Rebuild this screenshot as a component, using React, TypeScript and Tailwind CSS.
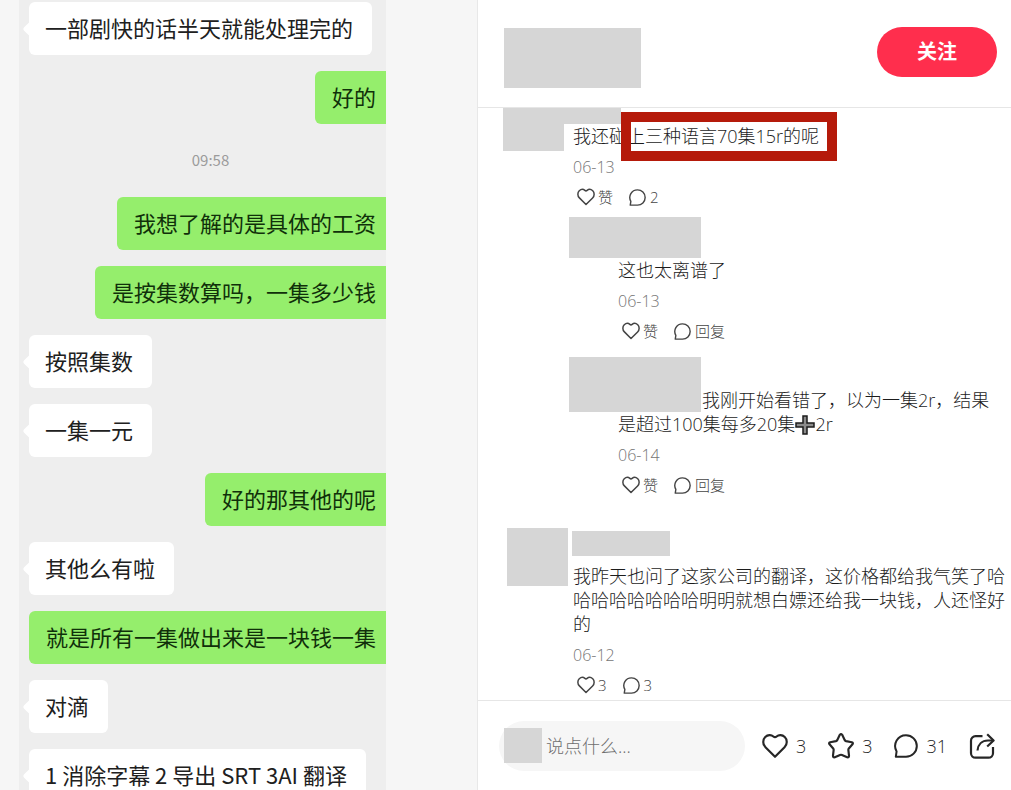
import type { ReactNode } from "react";

type Message = {
  from: "me" | "them" | "time";
  text: string;
};

const messages: Message[] = [
  { from: "them", text: "一部剧快的话半天就能处理完的" },
  { from: "me", text: "好的" },
  { from: "time", text: "09:58" },
  { from: "me", text: "我想了解的是具体的工资" },
  { from: "me", text: "是按集数算吗，一集多少钱" },
  { from: "them", text: "按照集数" },
  { from: "them", text: "一集一元" },
  { from: "me", text: "好的那其他的呢" },
  { from: "them", text: "其他么有啦" },
  { from: "me", text: "就是所有一集做出来是一块钱一集" },
  { from: "them", text: "对滴" },
  { from: "them", text: "1 消除字幕 2 导出 SRT 3AI 翻译" },
];

type IconProps = { className: string; strokeWidth?: number };

function HeartIcon({ className, strokeWidth = 2 }: IconProps) {
  return (
    <svg
      viewBox="0 0 24 24"
      fill="none"
      stroke="currentColor"
      strokeWidth={strokeWidth}
      strokeLinejoin="round"
      className={className}
      aria-hidden="true"
    >
      <path d="M12 22 3.200 13.200C.4 10.300.6 6 3 3.700 5.300 1.500 8.600 1.500 10.500 3.200 11.300 3.900 12.700 3.900 13.500 3.200 15.400 1.500 18.700 1.500 21 3.700 23.400 6 23.600 10.300 20.800 13.200Z" />
    </svg>
  );
}

function CommentIcon({ className, strokeWidth = 2 }: IconProps) {
  return (
    <svg
      viewBox="0 0 24 24"
      fill="none"
      stroke="currentColor"
      strokeWidth={strokeWidth}
      strokeLinejoin="round"
      className={className}
      aria-hidden="true"
    >
      <path d="M12 1.200A10.800 10.800 0 1 1 12 22.800H1.800L2.600 17.400A10.800 10.800 0 0 1 12 1.200Z" />
    </svg>
  );
}

function StarIcon({ className }: IconProps) {
  return (
    <svg
      viewBox="0 0 24 24"
      fill="none"
      stroke="currentColor"
      strokeWidth={2}
      strokeLinejoin="round"
      className={className}
      aria-hidden="true"
    >
      <path d="M10.900 1.700Q12 .4 13.100 1.700L15.500 6.600Q15.900 7.300 16.700 7.500L22 8.500Q23.600 9 22.600 10.400L19.200 14.300Q18.700 14.900 18.800 15.700L19.400 21Q19.400 22.900 17.700 22.400L12.900 20.300Q12 19.900 11.100 20.300L6.300 22.400Q4.600 22.900 4.600 21L5.200 15.700Q5.300 14.900 4.800 14.300L1.400 10.400Q.4 9 2 8.500L7.300 7.500Q8.100 7.300 8.500 6.600Z" />
    </svg>
  );
}

function ShareIcon({ className }: IconProps) {
  return (
    <svg
      viewBox="0 0 26 26"
      fill="none"
      stroke="currentColor"
      strokeWidth={2.2}
      strokeLinejoin="round"
      className={className}
      aria-hidden="true"
    >
      <path d="M13.500 3.200H6.500a4.500 4.500 0 0 0-4.500 4.500v12.500a4.500 4.500 0 0 0 4.500 4.500h13a4.500 4.500 0 0 0 4.500-4.500V14" />
      <path d="M8.500 17.500C9 11.500 13 7.500 19 7.500H24" />
      <path d="M18.200 1.200 24.600 7.500l-6.400 6" />
    </svg>
  );
}

function Bubble({ from, text }: Message) {
  if (from === "time") {
    return (
      <li className="flex h-[41px] items-center justify-center pl-4 text-[15px] text-[#9b9b9b]">
        {text}
      </li>
    );
  }
  if (from === "me") {
    return (
      <li className="flex h-[53px] items-center self-end rounded-l-md bg-[#95ee6c] pr-[10px] pb-0.5 pl-[17px] text-[22px] whitespace-nowrap text-[#10300a]">
        {text}
      </li>
    );
  }
  return (
    <li className="relative ml-[10px] flex h-[53px] items-center self-start rounded-md bg-white pr-[19px] pb-0.5 pl-4 text-[22px] whitespace-nowrap text-[#202020]">
      <span className="absolute top-1/2 -left-1 size-3 -translate-y-1/2 rotate-45 rounded-xs bg-white" />
      {text}
    </li>
  );
}

function Actions({ likes, replies }: { likes: string; replies: string }) {
  return (
    <div className="mt-[10px] flex h-5 items-center gap-4 pl-1 text-[15px] text-[#444444]">
      <button type="button" className="flex items-center gap-[3px]">
        <HeartIcon className="size-[18px]" />
        {likes}
      </button>
      <button type="button" className="flex items-center gap-1">
        <CommentIcon className="size-[17px]" />
        {replies}
      </button>
    </div>
  );
}

function DateLine({ children }: { children: ReactNode }) {
  return (
    <p className="mt-[9px] text-base leading-5 text-[#757575]">{children}</p>
  );
}

function Chat() {
  return (
    <section className="w-[478px] shrink-0 border-r border-[#e8e8e8] bg-[#f6f6f6] pl-[19px] font-['Noto_Sans_CJK_SC',sans-serif]">
      <ul className="flex min-h-full w-[367px] flex-col gap-4 bg-[#eeeeee] pt-0.5">
        {messages.map((message) => (
          <Bubble key={message.text} {...message} />
        ))}
      </ul>
    </section>
  );
}

function Comments() {
  return (
    <div className="min-h-0 flex-1 overflow-hidden pl-[25px] text-lg leading-6 text-[#1c1c1c]">
      <article className="flex">
        <div className="h-[43px] w-[61px] shrink-0 bg-[#d6d6d6]" />
        <div className="flex-1">
          <div className="h-4 w-[57px] bg-[#d6d6d6]" />
          <div className="relative pl-[9px]">
            <p>我还碰上三种语言70集15r的呢</p>
            <div className="absolute -top-3 left-[57px] h-[49px] w-[216px] border-[10px] border-[#b51a0a]" />
            <DateLine>06-13</DateLine>
            <Actions likes="赞" replies="2" />
          </div>
        </div>
      </article>

      <article className="mt-[10px] pl-[66px]">
        <div className="h-[41px] w-[132px] bg-[#d6d6d6]" />
        <div className="pl-[49px]">
          <p>这也太离谱了</p>
          <DateLine>06-13</DateLine>
          <Actions likes="赞" replies="回复" />
        </div>
      </article>

      <article className="mt-4 pl-[115px]">
        <p>
          <span className="mr-px -ml-[49px] inline-block h-[55px] w-[132px] bg-[#d6d6d6] align-bottom" />
          我刚开始看错了，以为一集2r，结果
          <br />
          是超过100集每多20集
          <svg
            viewBox="0 0 20 20"
            className="inline-block size-5 align-[-4px]"
            role="img"
            aria-label="加"
          >
            <path
              d="M8 1h4v7h7v4h-7v7H8v-7H1V8h7Z"
              fill="#8c8c8c"
              stroke="#1c1c1c"
              strokeWidth="1.500"
            />
          </svg>
          2r
        </p>
        <DateLine>06-14</DateLine>
        <Actions likes="赞" replies="回复" />
      </article>

      <article className="mt-[33px] flex gap-1 pl-1">
        <div className="h-[58px] w-[61px] shrink-0 bg-[#d6d6d6]" />
        <div className="flex-1 pt-[3px]">
          <div className="mb-2 h-[25px] w-[98px] bg-[#d6d6d6]" />
          <div className="pl-px">
            <p>
              我昨天也问了这家公司的翻译，这价格都给我气笑了哈哈哈哈哈哈哈哈明明就想白嫖还给我一块钱，人还怪好的
            </p>
            <DateLine>06-12</DateLine>
            <Actions likes="3" replies="3" />
          </div>
        </div>
      </article>
    </div>
  );
}

function Footer() {
  return (
    <footer className="flex h-[90px] shrink-0 items-center border-t border-[#e6e6e6] pr-4 pl-[21px] text-lg text-[#262626]">
      <label className="flex h-[50px] min-w-0 flex-1 items-center gap-1 rounded-full bg-[#f6f6f6] pl-[5px]">
        <span className="h-[35px] w-[38px] shrink-0 bg-[#d6d6d6]" />
        <input
          type="text"
          aria-label="说点什么"
          placeholder="说点什么..."
          className="w-full min-w-0 bg-transparent outline-none placeholder:text-[#6e6e6e]"
        />
      </label>
      <div className="ml-[17px] flex items-center gap-[22px]">
        <button type="button" className="flex items-center gap-2">
          <HeartIcon className="size-[26px]" />3
        </button>
        <button type="button" className="flex items-center gap-2">
          <StarIcon className="size-[26px]" />3
        </button>
        <button type="button" className="flex items-center gap-2">
          <CommentIcon className="size-6" />
          31
        </button>
        <button type="button" aria-label="分享">
          <ShareIcon className="size-[26px]" />
        </button>
      </div>
    </footer>
  );
}

export default function App() {
  return (
    <main className="flex h-screen overflow-hidden bg-white">
      <Chat />
      <section className="flex min-w-0 flex-1 flex-col font-['Open_Sans','Noto_Sans_CJK_SC',sans-serif] font-light">
        <header className="flex h-[108px] shrink-0 items-start justify-between border-b border-[#e6e6e6] pt-[27px] pr-[14px] pl-[26px]">
          <div className="mt-px h-[60px] w-[137px] bg-[#d6d6d6]" />
          <button
            type="button"
            className="h-[50px] w-[120px] rounded-full bg-[#ff2e4d] text-xl font-bold text-white"
          >
            关注
          </button>
        </header>
        <Comments />
        <Footer />
      </section>
    </main>
  );
}
